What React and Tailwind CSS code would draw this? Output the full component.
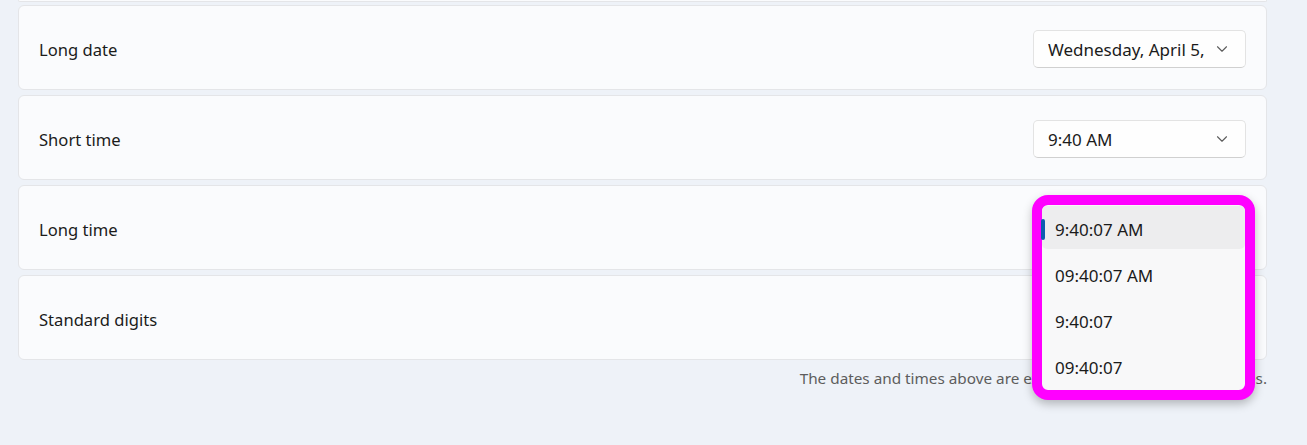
import React from "react";

const Chevron = () => (
  <svg width="12" height="8" viewBox="0 0 12 8" fill="none">
    <path d="M1.5 1.75 L6 6.25 L10.5 1.75" stroke="#5c5c5c" strokeWidth="1.1" strokeLinecap="round" strokeLinejoin="round" />
  </svg>
);

const Dropdown = ({ value }) => (
  <div className="flex h-[38px] w-[213px] items-center justify-between rounded-[5px] border border-[#e3e3e3] border-b-[#d0d0d0] bg-[#fefefe] pl-[14px] pr-[17px]">
    <span className="block w-[156px] overflow-hidden whitespace-nowrap pt-[3px] text-[17px] text-[#1b1b1b]">{value}</span>
    <Chevron />
  </div>
);

const Card = ({ label, value }) => (
  <div className="flex h-[85px] items-center justify-between rounded-[6px] border border-[#e4e5e8] bg-[#fafbfd] pl-[20px] pr-[20px] pt-[2px]">
    <span className="pt-[3px] text-[16.6px] text-[#1b1b1b]">{label}</span>
    <Dropdown value={value} />
  </div>
);

export default function App() {
  const items = ["9:40:07 AM", "09:40:07 AM", "9:40:07", "09:40:07"];
  return (
    <div
      className="relative h-[445px] w-full overflow-hidden bg-[#eef2f8] pl-[18px] pr-[40px]"
      style={{ fontFamily: '"Noto Sans", "Open Sans", sans-serif' }}
    >
      <div className="h-[2px] rounded-b-[6px] border-x border-b border-[#e4e5e8] bg-[#fafbfd]" />
      <div className="mt-[3px] flex flex-col gap-[5px]">
        <Card label="Long date" value="Wednesday, April 5, 2023" />
        <Card label="Short time" value="9:40 AM" />
        <Card label="Long time" value="9:40:07 AM" />
        <Card label="Standard digits" value="0123456789" />
      </div>
      <div className="mt-[7px] text-right text-[15.3px] text-[#5d5d5d]">
        The dates and times above are examples in your preferred styles.
      </div>

      <div className="absolute left-[1032px] top-[195px] h-[205px] w-[223px] rounded-[16px] border-[10px] border-[#ff00ff] bg-[#f8f8f9] shadow-[0_4px_10px_rgba(0,0,0,0.25)]">
        <div className="flex flex-col pt-[1px]">
          {items.map((t, i) => (
            <div key={t} className="relative h-[46px]">
              {i === 0 ? (
                <div className="flex h-[43px] items-center rounded-[5px] bg-[#ededee] pl-[13px] pt-[5px] text-[17px] text-[#1b1b1b]">
                  {t}
                </div>
              ) : (
                <div className="flex h-[46px] items-center pl-[13px] pt-[2px] text-[17px] text-[#1b1b1b]">
                  {t}
                </div>
              )}
              {i === 0 && (
                <div className="absolute left-[-1px] top-[13px] h-[21px] w-[4px] rounded-full bg-[#0d5db0]" />
              )}
            </div>
          ))}
        </div>
      </div>
    </div>
  );
}
